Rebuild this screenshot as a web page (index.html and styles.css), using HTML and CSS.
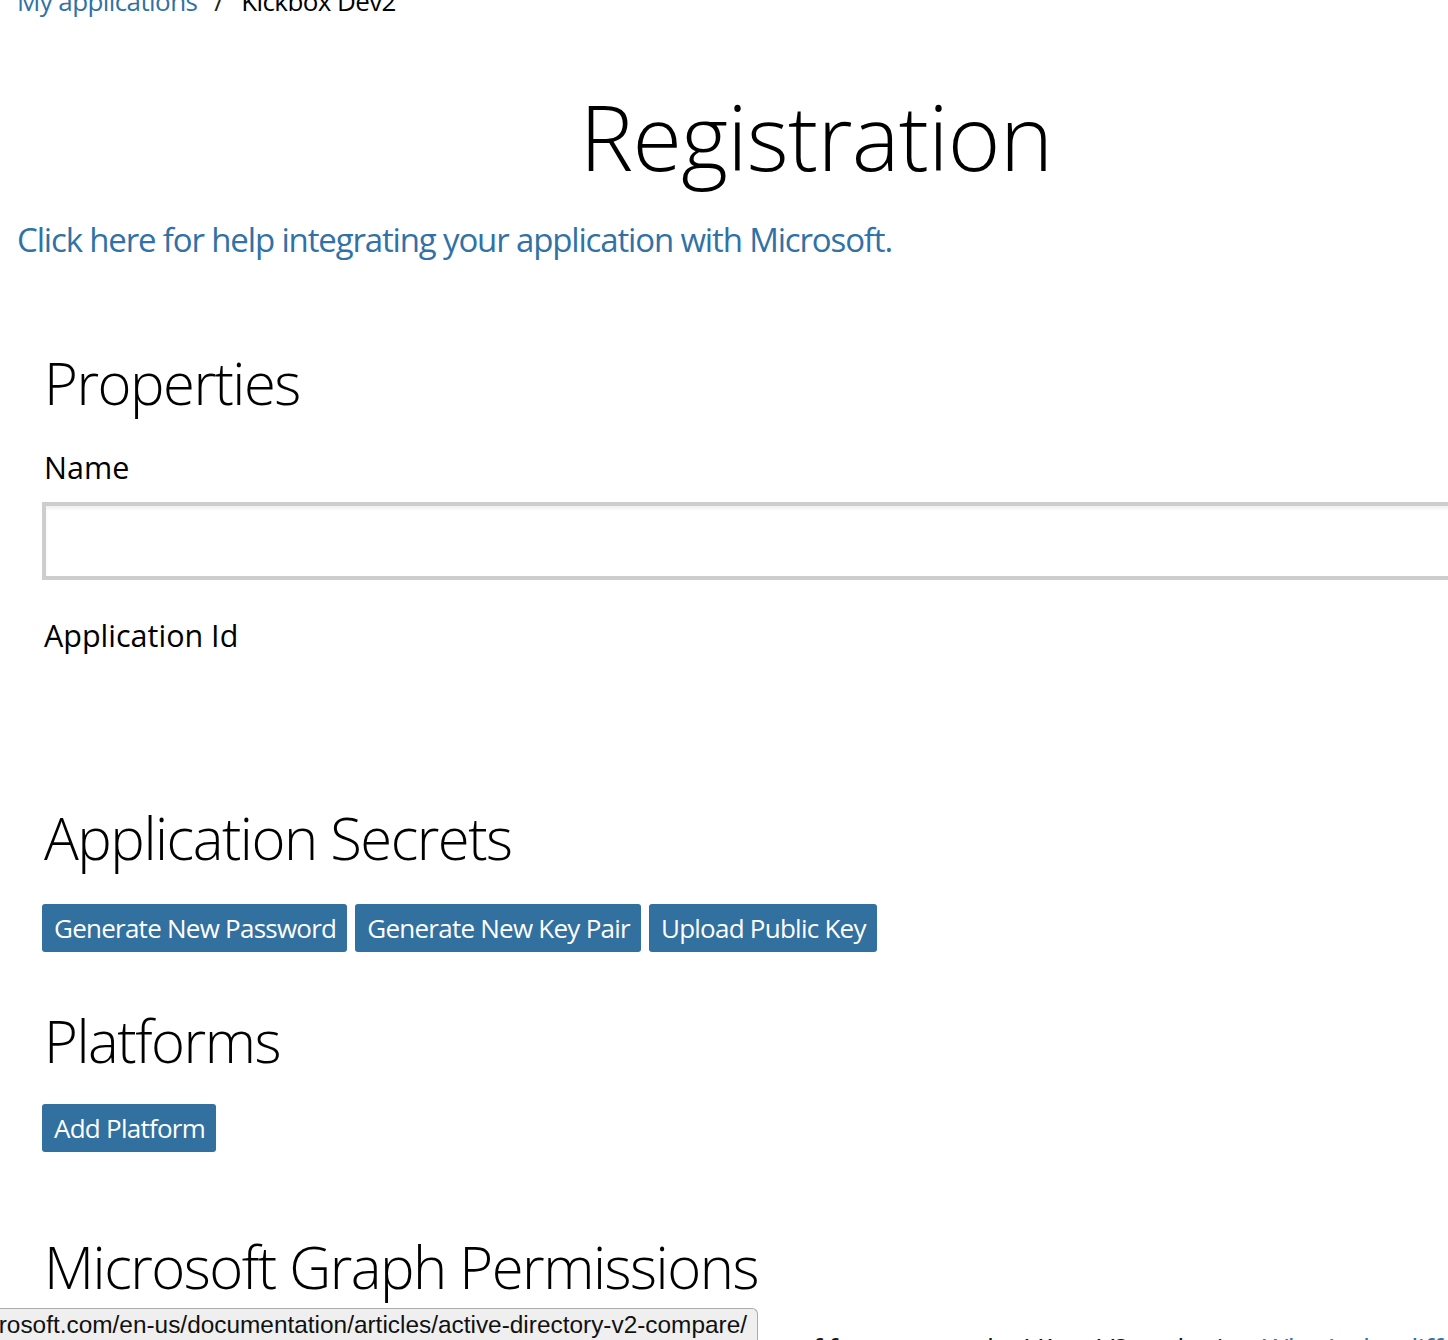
FILE: index.html
```html
<!DOCTYPE html>
<html lang="en">
<head>
<meta charset="utf-8">
<title>Registration</title>
<link rel="stylesheet" href="styles.css">
</head>
<body>
<div class="page">
  <nav class="breadcrumb">
    <a class="crumb-link" href="#">My applications</a>
    <span class="crumb-sep">/</span>
    <span class="crumb-current">Kickbox Dev2</span>
  </nav>

  <h1 class="page-title">Registration</h1>

  <a class="help-link" href="#">Click here for help integrating your application with Microsoft.</a>

  <section class="section section-properties">
    <h2 class="section-title">Properties</h2>
    <label class="field-label" for="appname">Name</label>
    <input class="text-input" id="appname" type="text">
    <div class="field-label field-appid">Application Id</div>
  </section>

  <section class="section section-secrets">
    <h2 class="section-title">Application Secrets</h2>
    <div class="btn-row">
      <button class="btn">Generate New Password</button>
      <button class="btn">Generate New Key Pair</button>
      <button class="btn">Upload Public Key</button>
    </div>
  </section>

  <section class="section section-platforms">
    <h2 class="section-title">Platforms</h2>
    <div class="btn-row">
      <button class="btn">Add Platform</button>
    </div>
  </section>

  <section class="section section-graph">
    <h2 class="section-title">Microsoft Graph Permissions</h2>
    <p class="graph-note">Select the permissions your app requires, to take advantage of features on the V1 or V2 endpoint: <a class="note-link" href="#">What's the difference?</a></p>
  </section>
</div>

<div class="status-bar"><span class="status-url">https://azure.microsoft.com/en-us/documentation/articles/active-directory-v2-compare/</span></div>
</body>
</html>
```

FILE: styles.css
```css
html {
  overflow: hidden;
}

body {
  margin: 0;
  background: #ffffff;
  color: #000000;
  font-family: "Open Sans", "Noto Sans", "Liberation Sans", sans-serif;
}

.page {
  width: 1598px;
  padding-left: 17px;
}

a {
  color: #3171a6;
  text-decoration: none;
}

.breadcrumb {
  display: flex;
  align-items: baseline;
  margin-top: -19px;
  height: 40px;
  font-size: 26px;
  line-height: 40px;
  letter-spacing: -0.6px;
}

.crumb-sep {
  margin: 0 18px 0 17px;
  color: #222;
}

.page-title {
  margin: 65px 0 0;
  font-size: 90px;
  line-height: 100px;
  font-weight: 300;
  text-align: center;
  letter-spacing: -0.7px;
}

.help-link {
  display: block;
  margin-top: 30px;
  font-size: 33px;
  line-height: 48px;
  letter-spacing: -1.15px;
}

.section {
  padding-left: 27px;
}

.section-title {
  margin: 0;
  font-size: 58px;
  line-height: 70px;
  font-weight: 300;
  letter-spacing: -1.5px;
}

.section-properties .section-title {
  margin-top: 84px;
}

.field-label {
  display: block;
  margin-top: 29px;
  font-size: 30.5px;
  line-height: 40px;
  letter-spacing: 0;
}

.text-input {
  display: block;
  box-sizing: border-box;
  margin: 15px 0 0 -2px;
  width: 1560px;
  height: 78px;
  border: 4px solid #cdcdcd;
  border-radius: 0;
  background: #fff;
  box-shadow: inset 0 3px 3px rgba(0, 0, 0, 0.06);
  outline: none;
}

.field-appid {
  margin-top: 35px;
}

.section-secrets .section-title {
  margin-top: 148px;
}

.btn-row {
  display: flex;
  gap: 8px;
  margin: 31px 0 0 -2px;
}

.btn {
  height: 48px;
  padding: 0 11px 0 12px;
  border: none;
  border-radius: 3px;
  background: #31709f;
  color: #ffffff;
  font-family: "Open Sans", "Noto Sans", "Liberation Sans", sans-serif;
  font-size: 26px;
  line-height: 48px;
  letter-spacing: -0.75px;
}

.section-platforms .section-title {
  margin-top: 54px;
}

.section-platforms .btn-row {
  margin-top: 28px;
}

.section-graph .section-title {
  margin-top: 80px;
}

.graph-note {
  margin: 26px 0 0;
  font-size: 28px;
  line-height: 40px;
  white-space: nowrap;
  letter-spacing: -0.6px;
  color: #111;
}

.note-link {
  color: #3171a6;
}

.status-bar {
  position: fixed;
  left: 0;
  bottom: 0;
  box-sizing: border-box;
  width: 758px;
  height: 32px;
  padding-right: 10px;
  display: flex;
  justify-content: flex-end;
  align-items: center;
  overflow: hidden;
  background: #efefef;
  border: 1px solid #ababab;
  border-left: none;
  border-bottom: none;
  border-top-right-radius: 6px;
  font-family: "Liberation Sans", Arial, sans-serif;
  font-size: 24.4px;
  color: #111;
  white-space: nowrap;
}

.status-url {
  flex: none;
}
```
